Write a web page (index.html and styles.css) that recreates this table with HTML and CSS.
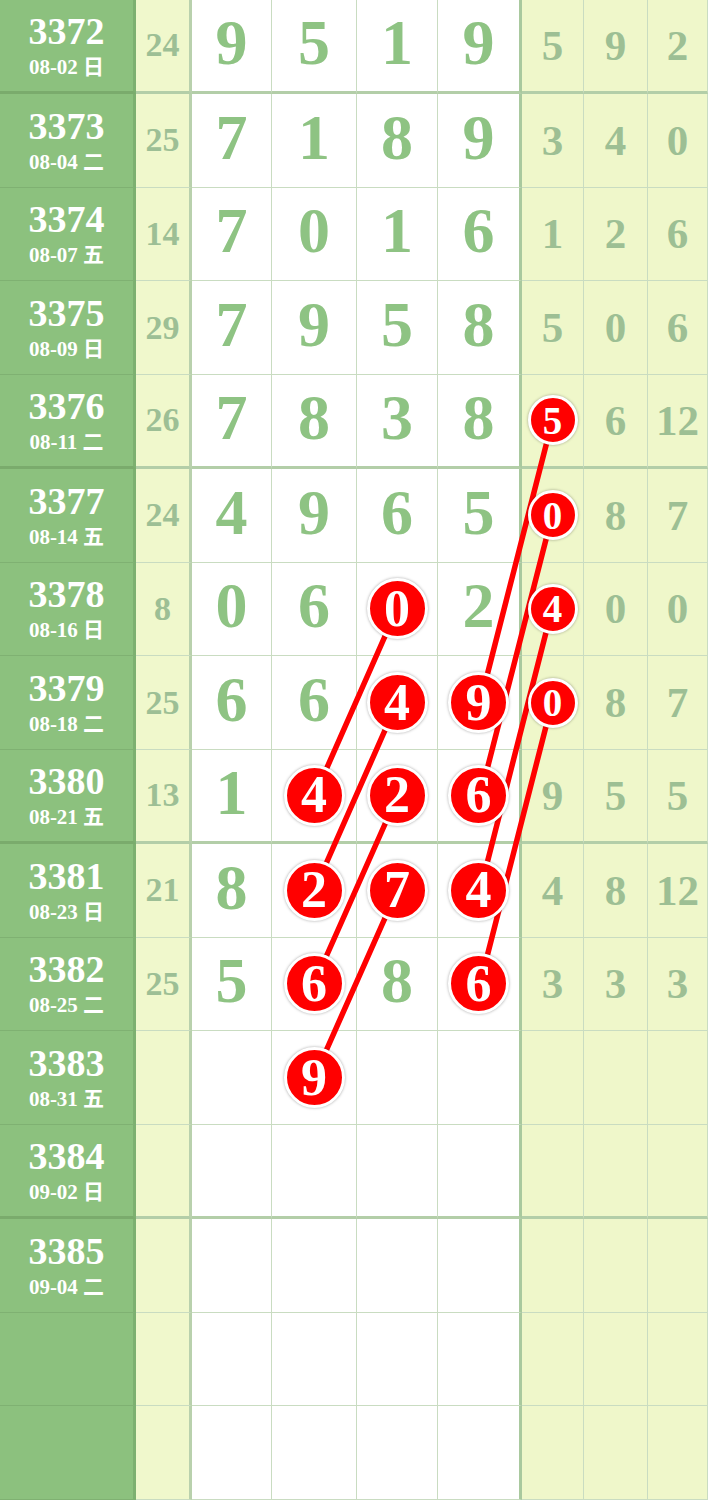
FILE: index.html
```html
<!DOCTYPE html>
<html lang="zh">
<head>
    <meta charset="UTF-8">
    <meta name="viewport" content="width=device-width, initial-scale=1.0">
    <title>走势图</title>
    <link rel="stylesheet" href="styles.css">
</head>
<body>
    <div class="chart">
        <!-- trend lines, drawn under the balls -->
        <svg class="trend" width="708" height="1500" viewBox="0 0 708 1500">
            <g stroke="#ff0000" stroke-width="5.5" stroke-linecap="round">
                <line x1="397" y1="609" x2="314" y2="797"/>
                <line x1="397" y1="703" x2="314" y2="891"/>
                <line x1="397" y1="797" x2="314" y2="984"/>
                <line x1="397" y1="891" x2="314" y2="1078"/>
                <line x1="552" y1="422" x2="480" y2="703"/>
                <line x1="552" y1="516" x2="480" y2="797"/>
                <line x1="552" y1="609" x2="480" y2="891"/>
                <line x1="552" y1="703" x2="480" y2="984"/>
            </g>
        </svg>

        <div class="row sep">
            <div class="cell issue"><span class="no">3372</span><span class="date">08-02 日</span></div>
            <div class="cell sum">24</div>
            <div class="cell big">9</div><div class="cell big">5</div><div class="cell big">1</div><div class="cell big last">9</div>
            <div class="cell small">5</div><div class="cell small">9</div><div class="cell small">2</div>
        </div>
        <div class="row">
            <div class="cell issue"><span class="no">3373</span><span class="date">08-04 二</span></div>
            <div class="cell sum">25</div>
            <div class="cell big">7</div><div class="cell big">1</div><div class="cell big">8</div><div class="cell big last">9</div>
            <div class="cell small">3</div><div class="cell small">4</div><div class="cell small">0</div>
        </div>
        <div class="row">
            <div class="cell issue"><span class="no">3374</span><span class="date">08-07 五</span></div>
            <div class="cell sum">14</div>
            <div class="cell big">7</div><div class="cell big">0</div><div class="cell big">1</div><div class="cell big last">6</div>
            <div class="cell small">1</div><div class="cell small">2</div><div class="cell small">6</div>
        </div>
        <div class="row">
            <div class="cell issue"><span class="no">3375</span><span class="date">08-09 日</span></div>
            <div class="cell sum">29</div>
            <div class="cell big">7</div><div class="cell big">9</div><div class="cell big">5</div><div class="cell big last">8</div>
            <div class="cell small">5</div><div class="cell small">0</div><div class="cell small">6</div>
        </div>
        <div class="row sep">
            <div class="cell issue"><span class="no">3376</span><span class="date">08-11 二</span></div>
            <div class="cell sum">26</div>
            <div class="cell big">7</div><div class="cell big">8</div><div class="cell big">3</div><div class="cell big last">8</div>
            <div class="cell small"><span class="ball">5</span></div><div class="cell small">6</div><div class="cell small">12</div>
        </div>
        <div class="row">
            <div class="cell issue"><span class="no">3377</span><span class="date">08-14 五</span></div>
            <div class="cell sum">24</div>
            <div class="cell big">4</div><div class="cell big">9</div><div class="cell big">6</div><div class="cell big last">5</div>
            <div class="cell small"><span class="ball">0</span></div><div class="cell small">8</div><div class="cell small">7</div>
        </div>
        <div class="row">
            <div class="cell issue"><span class="no">3378</span><span class="date">08-16 日</span></div>
            <div class="cell sum">8</div>
            <div class="cell big">0</div><div class="cell big">6</div><div class="cell big"><span class="ball">0</span></div><div class="cell big last">2</div>
            <div class="cell small"><span class="ball">4</span></div><div class="cell small">0</div><div class="cell small">0</div>
        </div>
        <div class="row">
            <div class="cell issue"><span class="no">3379</span><span class="date">08-18 二</span></div>
            <div class="cell sum">25</div>
            <div class="cell big">6</div><div class="cell big">6</div><div class="cell big"><span class="ball">4</span></div><div class="cell big last"><span class="ball">9</span></div>
            <div class="cell small"><span class="ball">0</span></div><div class="cell small">8</div><div class="cell small">7</div>
        </div>
        <div class="row sep">
            <div class="cell issue"><span class="no">3380</span><span class="date">08-21 五</span></div>
            <div class="cell sum">13</div>
            <div class="cell big">1</div><div class="cell big"><span class="ball">4</span></div><div class="cell big"><span class="ball">2</span></div><div class="cell big last"><span class="ball">6</span></div>
            <div class="cell small">9</div><div class="cell small">5</div><div class="cell small">5</div>
        </div>
        <div class="row">
            <div class="cell issue"><span class="no">3381</span><span class="date">08-23 日</span></div>
            <div class="cell sum">21</div>
            <div class="cell big">8</div><div class="cell big"><span class="ball">2</span></div><div class="cell big"><span class="ball">7</span></div><div class="cell big last"><span class="ball">4</span></div>
            <div class="cell small">4</div><div class="cell small">8</div><div class="cell small">12</div>
        </div>
        <div class="row">
            <div class="cell issue"><span class="no">3382</span><span class="date">08-25 二</span></div>
            <div class="cell sum">25</div>
            <div class="cell big">5</div><div class="cell big"><span class="ball">6</span></div><div class="cell big">8</div><div class="cell big last"><span class="ball">6</span></div>
            <div class="cell small">3</div><div class="cell small">3</div><div class="cell small">3</div>
        </div>
        <div class="row">
            <div class="cell issue"><span class="no">3383</span><span class="date">08-31 五</span></div>
            <div class="cell sum"></div>
            <div class="cell big"></div><div class="cell big"><span class="ball">9</span></div><div class="cell big"></div><div class="cell big last"></div>
            <div class="cell small"></div><div class="cell small"></div><div class="cell small"></div>
        </div>
        <div class="row sep">
            <div class="cell issue"><span class="no">3384</span><span class="date">09-02 日</span></div>
            <div class="cell sum"></div>
            <div class="cell big"></div><div class="cell big"></div><div class="cell big"></div><div class="cell big last"></div>
            <div class="cell small"></div><div class="cell small"></div><div class="cell small"></div>
        </div>
        <div class="row">
            <div class="cell issue"><span class="no">3385</span><span class="date">09-04 二</span></div>
            <div class="cell sum"></div>
            <div class="cell big"></div><div class="cell big"></div><div class="cell big"></div><div class="cell big last"></div>
            <div class="cell small"></div><div class="cell small"></div><div class="cell small"></div>
        </div>
        <div class="row">
            <div class="cell issue"></div>
            <div class="cell sum"></div>
            <div class="cell big"></div><div class="cell big"></div><div class="cell big"></div><div class="cell big last"></div>
            <div class="cell small"></div><div class="cell small"></div><div class="cell small"></div>
        </div>
        <div class="row">
            <div class="cell issue"></div>
            <div class="cell sum"></div>
            <div class="cell big"></div><div class="cell big"></div><div class="cell big"></div><div class="cell big last"></div>
            <div class="cell small"></div><div class="cell small"></div><div class="cell small"></div>
        </div>
    </div>
</body>
</html>
```

FILE: styles.css
```css
body {
    margin: 0;
    padding: 0;
    background: #ffffff;
    font-family: 'Liberation Serif', 'Noto Sans CJK SC', serif;
    font-weight: bold;
}
.chart {
    position: relative;
    width: 708px;
    height: 1500px;
    overflow: hidden;
}
.trend {
    position: absolute;
    left: 0;
    top: 0;
    z-index: 1;
    pointer-events: none;
}
.row {
    display: grid;
    grid-template-columns: 136px 56px 80px 85px 81px 84px 62px 64px 60px;
    height: 93.75px;
}
.cell {
    box-sizing: border-box;
    display: flex;
    align-items: center;
    justify-content: center;
    border-right: 1px solid #c9dcc1;
    border-bottom: 1px solid #c9dcc1;
    line-height: 1;
}
.row.sep .cell {
    border-bottom: 3px solid #b3cea8;
}
.issue {
    flex-direction: column;
    background: #8cc17e;
    color: #ffffff;
    border-right: 3px solid #7db070;
    border-bottom-color: #7fb172;
}
.row.sep .issue {
    border-bottom-color: #7aab6c;
}
.issue .no {
    font-size: 38px;
    line-height: 37px;
}
.issue .date {
    font-size: 21px;
    line-height: 22px;
    margin-top: 6px;
}
.sum {
    background: #f0f8cc;
    color: #9dbf95;
    font-size: 34px;
    border-right: 3px solid #b9d1ad;
}
.big {
    background: #ffffff;
    color: #8ec383;
    font-size: 64px;
    padding-bottom: 5px;
}
.big.last {
    border-right: 3px solid #a9c99e;
}
.small {
    background: #eff7ca;
    color: #9dbf94;
    font-size: 43px;
}
.ball {
    position: relative;
    z-index: 2;
    box-sizing: border-box;
    display: flex;
    align-items: center;
    justify-content: center;
    width: 61px;
    height: 61px;
    border: 3px solid #ffffff;
    border-radius: 50%;
    background: #ff0000;
    color: #ffffff;
    font-size: 52px;
    box-shadow: 0 0 3px rgba(0, 0, 0, 0.35);
}
.big .ball {
    margin-bottom: -5px;
}
.small .ball {
    width: 50px;
    height: 50px;
    font-size: 39px;
}
```
